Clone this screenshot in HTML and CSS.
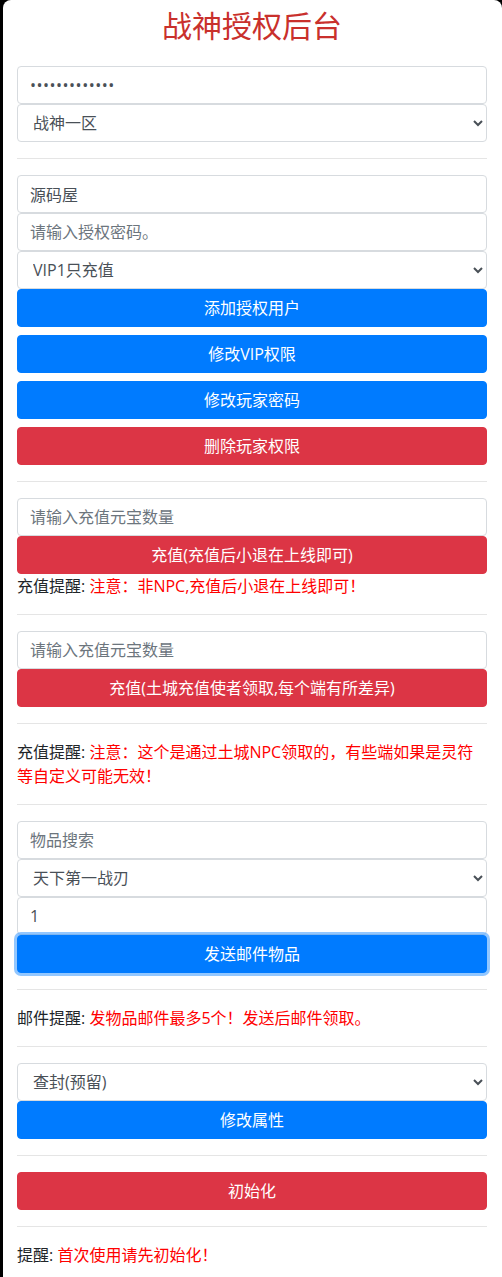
FILE: index.html
```html
<!DOCTYPE html>
<html lang="zh-CN">
<head>
	<meta charset="UTF-8">
	<meta name="viewport" content="width=device-width, initial-scale=1.0">
	<title>战神授权后台</title>
	<link rel="stylesheet" href="styles.css">
</head>
<body>
	<div class="panel">
		<h2 class="title">战神授权后台</h2>

		<input class="form-control pass" type="password" value="1234567890123">
		<select class="form-control">
			<option>战神一区</option>
		</select>
		<hr>

		<input class="form-control" type="text" value="源码屋">
		<input class="form-control" type="text" placeholder="请输入授权密码。">
		<select class="form-control">
			<option>VIP1只充值</option>
		</select>
		<button class="btn btn-primary">添加授权用户</button>
		<button class="btn btn-primary">修改VIP权限</button>
		<button class="btn btn-primary">修改玩家密码</button>
		<button class="btn btn-danger">删除玩家权限</button>
		<hr>

		<input class="form-control" type="text" placeholder="请输入充值元宝数量">
		<button class="btn btn-danger">充值(充值后小退在上线即可)</button>
		<p class="note">充值提醒: <span class="warn">注意：非NPC,充值后小退在上线即可！</span></p>
		<hr>

		<input class="form-control" type="text" placeholder="请输入充值元宝数量">
		<button class="btn btn-danger">充值(土城充值使者领取,每个端有所差异)</button>
		<hr>
		<p class="note">充值提醒: <span class="warn">注意：这个是通过土城NPC领取的，有些端如果是灵符等自定义可能无效！</span></p>
		<hr>

		<input class="form-control" type="text" placeholder="物品搜索">
		<select class="form-control">
			<option>天下第一战刃</option>
		</select>
		<input class="form-control" type="text" value="1">
		<button class="btn btn-primary focus">发送邮件物品</button>
		<hr>
		<p class="note">邮件提醒: <span class="warn">发物品邮件最多5个！发送后邮件领取。</span></p>
		<hr>

		<select class="form-control">
			<option>查封(预留)</option>
		</select>
		<button class="btn btn-primary">修改属性</button>
		<hr>

		<button class="btn btn-danger">初始化</button>
		<hr>
		<p class="note">提醒: <span class="warn">首次使用请先初始化！</span></p>
	</div>
</body>
</html>
```

FILE: styles.css
```css
body {
	margin: 0;
	background-color: #000;
	font-family: "Open Sans", "Noto Sans CJK SC", sans-serif;
	font-size: 16px;
	line-height: 1.5;
	color: #212529;
}
.panel {
	margin-left: 3px;
	min-height: 100vh;
	padding: 0 15px 0 14px;
	background-color: #fff;
	border-radius: 8px 8px 0 0;
	box-sizing: border-box;
}
.title {
	margin: 0 0 20px;
	padding-top: 6px;
	font-size: 30px;
	font-weight: normal;
	line-height: 40px;
	text-align: center;
	color: #c9302c;
}
.form-control {
	display: block;
	width: 100%;
	height: 38px;
	margin: 0;
	padding: 6px 12px;
	font-family: inherit;
	font-size: 16px;
	line-height: 1.5;
	color: #495057;
	background-color: #fff;
	border: 1px solid #d7dbdf;
	border-radius: 4px;
	box-sizing: border-box;
}
.form-control::placeholder {
	color: #6c757d;
}
.pass {
	letter-spacing: 0.5px;
}
select.form-control {
	padding-left: 11px;
}
.btn {
	display: block;
	width: 100%;
	height: 38px;
	margin: 0;
	padding: 6px 12px;
	font-family: inherit;
	font-size: 16px;
	line-height: 1.5;
	color: #fff;
	text-align: center;
	border: 1px solid transparent;
	border-radius: 4px;
	box-sizing: border-box;
}
.btn + .btn {
	margin-top: 8px;
}
.btn-primary {
	background-color: #007bff;
	border-color: #007bff;
}
.btn-danger {
	background-color: #dc3545;
	border-color: #dc3545;
}
.btn.focus {
	box-shadow: 0 0 0 3px rgba(38, 143, 255, .5);
}
hr {
	margin: 16px 0;
	border: 0;
	border-top: 1px solid rgba(0, 0, 0, .1);
}
.note {
	margin: 0 0 16px;
}
.warn {
	color: #f00;
}
```
